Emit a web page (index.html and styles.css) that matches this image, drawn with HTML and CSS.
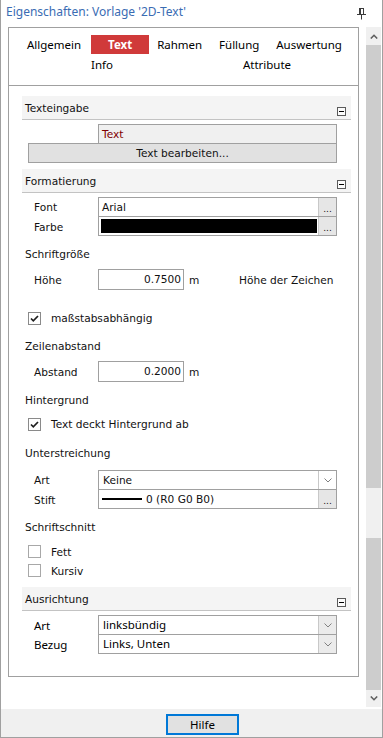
FILE: index.html
```html
<!DOCTYPE html>
<html lang="de">
<head>
<meta charset="utf-8">
<title>Eigenschaften</title>
<link rel="stylesheet" href="styles.css">
</head>
<body>
<div class="window">
  <div class="titlebar">
    <span class="title">Eigenschaften: Vorlage '2D-Text'</span>
    <svg class="pin" width="9" height="12" viewBox="0 0 9 12"><path d="M2 0.5h5M2.5 0.5v6M3.5 0.5v6M6.5 0.5v6M0 6.5h9M4.5 6.5v5" stroke="#3c3c3c" stroke-width="1" fill="none"/></svg>
  </div>
  <div class="main">
    <div class="panel">
      <div class="tabs">
        <div class="tabrow">
          <span class="tab first">Allgemein</span>
          <span class="tab active">Text</span>
          <span class="tab">Rahmen</span>
          <span class="tab">Füllung</span>
          <span class="tab">Auswertung</span>
        </div>
        <div class="tabrow second">
          <span class="tab info">Info</span>
          <span class="tab attr">Attribute</span>
        </div>
      </div>
      <div class="body">
        <div class="sec-head mt10"><span>Texteingabe</span><span class="collapse"></span></div>
        <div class="textfield mt4">Text</div>
        <div class="editbtn">Text bearbeiten...</div>

        <div class="sec-head mt6"><span>Formatierung</span><span class="collapse"></span></div>
        <div class="props mt4">
          <div class="plabel">Font</div>
          <div class="pval firstrow"><span class="ptext">Arial</span><span class="dots">...</span></div>
          <div class="plabel">Farbe</div>
          <div class="pval"><span class="swatch"></span><span class="dots">...</span></div>
        </div>

        <div class="subhead mt8">Schriftgröße</div>
        <div class="numrow mt5">
          <span class="nlabel">Höhe</span>
          <span class="numbox">0.7500</span>
          <span class="unit">m</span>
          <span class="hint">Höhe der Zeichen</span>
        </div>

        <div class="checkrow mt18">
          <span class="cbox"><svg width="11" height="11" viewBox="0 0 11 11"><path d="M2 5.5L4.3 7.8L9 3" stroke="#1e1e1e" stroke-width="1.7" fill="none"/></svg></span>
          <span class="clabel">maßstabsabhängig</span>
        </div>

        <div class="subhead mt8">Zeilenabstand</div>
        <div class="numrow mt5">
          <span class="nlabel">Abstand</span>
          <span class="numbox">0.2000</span>
          <span class="unit">m</span>
        </div>

        <div class="subhead mt8">Hintergrund</div>
        <div class="checkrow mt4">
          <span class="cbox"><svg width="11" height="11" viewBox="0 0 11 11"><path d="M2 5.5L4.3 7.8L9 3" stroke="#1e1e1e" stroke-width="1.7" fill="none"/></svg></span>
          <span class="clabel">Text deckt Hintergrund ab</span>
        </div>

        <div class="subhead mt9">Unterstreichung</div>
        <div class="props mt7">
          <div class="plabel">Art</div>
          <div class="pval firstrow"><span class="ptext pad">Keine</span><span class="drop white"><svg width="8" height="5" viewBox="0 0 8 5"><path d="M0.5 0.5L4 4L7.5 0.5" stroke="#808080" stroke-width="1" fill="none"/></svg></span></div>
          <div class="plabel">Stift</div>
          <div class="pval"><span class="ptext pen"><span class="penline"></span>0 (R0 G0 B0)</span><span class="dots">...</span></div>
        </div>

        <div class="subhead mt8">Schriftschnitt</div>
        <div class="checkrow small mt5">
          <span class="cbox empty"></span>
          <span class="clabel">Fett</span>
        </div>
        <div class="checkrow small">
          <span class="cbox empty"></span>
          <span class="clabel">Kursiv</span>
        </div>

        <div class="sec-head mt7"><span>Ausrichtung</span><span class="collapse"></span></div>
        <div class="props mt4">
          <div class="plabel ui">Art</div>
          <div class="pval firstrow"><span class="ptext ui pad">linksbündig</span><span class="drop"><svg width="8" height="5" viewBox="0 0 8 5"><path d="M0.5 0.5L4 4L7.5 0.5" stroke="#808080" stroke-width="1" fill="none"/></svg></span></div>
          <div class="plabel ui">Bezug</div>
          <div class="pval"><span class="ptext ui pad">Links, Unten</span><span class="drop"><svg width="8" height="5" viewBox="0 0 8 5"><path d="M0.5 0.5L4 4L7.5 0.5" stroke="#808080" stroke-width="1" fill="none"/></svg></span></div>
        </div>
      </div>
    </div>
    <div class="scrollbar">
      <div class="sb-btn"><svg width="8" height="5" viewBox="0 0 8 5"><path d="M0.8 4.5L4 1.3L7.2 4.5" stroke="#606060" stroke-width="1.6" fill="none"/></svg></div>
      <div class="sb-thumb upper"></div>
      <div class="sb-track"></div>
      <div class="sb-thumb lower"></div>
      <div class="sb-btn"><svg width="8" height="5" viewBox="0 0 8 5"><path d="M0.8 0.5L4 3.7L7.2 0.5" stroke="#606060" stroke-width="1.6" fill="none"/></svg></div>
    </div>
  </div>
  <div class="footer">
    <button class="help">Hilfe</button>
  </div>
</div>
</body>
</html>
```

FILE: styles.css
```css
html, body {
  margin: 0;
  padding: 0;
  background: #fff;
}

.window {
  width: 383px;
  height: 738px;
  box-sizing: border-box;
  border: 1px solid #a0a0a0;
  border-top: none;
  display: flex;
  flex-direction: column;
  background: #fff;
  font-family: "DejaVu Sans", sans-serif;
  font-size: 10.6px;
  color: #111;
}

.titlebar {
  height: 24px;
  flex: none;
  display: flex;
  align-items: center;
  justify-content: space-between;
  padding: 0 16px 0 5px;
}

.title {
  font-family: "Noto Sans", sans-serif;
  font-size: 12px;
  color: #3a6cb3;
  margin-top: -1px;
}

.pin {
  display: block;
  margin-top: 3px;
}

.main {
  flex: 1;
  display: flex;
  padding-left: 7px;
  min-height: 0;
}

.panel {
  width: 351px;
  height: 650px;
  margin-top: 3px;
  box-sizing: border-box;
  border: 1px solid #a0a0a0;
  display: flex;
  flex-direction: column;
}

/* tabs */
.tabs {
  border-bottom: 1px solid #a0a0a0;
  padding: 7px 0 10px;
  font-family: "Noto Sans", sans-serif;
  font-size: 11.5px;
  color: #000;
}

.tabrow {
  display: flex;
  height: 19px;
  align-items: center;
  padding-left: 10px;
}

.tabrow.second {
  height: 21px;
  padding-left: 74px;
}

.tab {
  min-width: 58px;
  box-sizing: border-box;
  padding: 0 8px;
  height: 19px;
  line-height: 19px;
  text-align: center;
  white-space: nowrap;
}

.tab.first {
  margin-right: 2px;
}

.tab.active {
  background: #d03a3a;
  color: #fff;
  font-weight: bold;
}

.tab.info {
  min-width: 0;
}

.tab.attr {
  min-width: 0;
  margin-left: 114px;
}

/* body */
.body {
  padding: 0 7px 0 13px;
}

.mt4 { margin-top: 4px; }
.mt5 { margin-top: 5px; }
.mt6 { margin-top: 6px; }
.mt7 { margin-top: 7px; }
.mt8 { margin-top: 8px; }
.mt9 { margin-top: 9px; }
.mt10 { margin-top: 10px; }
.mt18 { margin-top: 18px; }

.sec-head {
  height: 23px;
  background: #f4f4f4;
  border-bottom: 1px solid #c3c3c3;
  display: flex;
  justify-content: space-between;
  align-items: center;
  padding: 0 5px 0 3px;
}

.collapse {
  width: 9px;
  height: 9px;
  box-sizing: border-box;
  border: 1px solid #5a5a5a;
  background: #fbfbfb;
  align-self: flex-end;
  margin-bottom: 3px;
  position: relative;
}

.collapse::after {
  content: "";
  position: absolute;
  left: 1px;
  right: 1px;
  top: 3px;
  height: 1px;
  background: #000;
}

.textfield {
  margin-left: 76px;
  width: 239px;
  height: 19px;
  box-sizing: border-box;
  border: 1px solid #a0a0a0;
  border-bottom: none;
  background: #f0f0f0;
  color: #800000;
  padding-left: 3px;
  line-height: 18px;
}

.editbtn {
  margin-left: 6px;
  width: 309px;
  height: 20px;
  box-sizing: border-box;
  border: 1px solid #a0a0a0;
  background: #e1e1e1;
  text-align: center;
  line-height: 18px;
}

/* property grid */
.props {
  display: grid;
  grid-template-columns: 76px 239px;
}

.plabel {
  padding-left: 12px;
  display: flex;
  align-items: center;
}

.plabel.ui, .ptext.ui {
  font-family: "Noto Sans", sans-serif;
  font-size: 11.5px;
  color: #000;
}

.pval {
  border: 1px solid #a0a0a0;
  border-top: none;
  height: 18px;
  display: flex;
  background: #fff;
}

.pval.firstrow {
  border-top: 1px solid #a0a0a0;
}

.ptext {
  flex: 1;
  padding-left: 3px;
  line-height: 18px;
  white-space: nowrap;
}

.ptext.pad {
  padding-left: 4px;
}

.ptext.pen {
  display: flex;
  align-items: center;
  padding-left: 3px;
}

.penline {
  width: 40px;
  height: 2px;
  background: #000;
  margin-right: 4px;
}

.swatch {
  flex: 1;
  margin: 2px 1px 2px 2px;
  background: #000;
}

.dots {
  width: 17px;
  border-left: 1px solid #c8c8c8;
  background: #e6e6e6;
  text-align: center;
  line-height: 22px;
  font-size: 9px;
  overflow: hidden;
}

.drop {
  width: 17px;
  border-left: 1px solid #c8c8c8;
  background: #ebebeb;
  display: flex;
  align-items: center;
  justify-content: center;
}

.drop.white {
  background: #fff;
}

.drop svg { display: block; }

.subhead {
  height: 20px;
  line-height: 20px;
  padding-left: 3px;
}

.numrow {
  display: flex;
  align-items: center;
  height: 21px;
}

.nlabel {
  width: 64px;
  padding-left: 12px;
}

.numbox {
  width: 86px;
  height: 21px;
  box-sizing: border-box;
  border: 1px solid #a0a0a0;
  text-align: right;
  padding-right: 2px;
  line-height: 19px;
}

.unit {
  width: 55px;
  padding-left: 5px;
  box-sizing: border-box;
}

.checkrow {
  display: flex;
  align-items: center;
  height: 20px;
  padding-left: 6px;
}

.checkrow.small {
  height: 19px;
}

.cbox {
  width: 13px;
  height: 13px;
  box-sizing: border-box;
  border: 1px solid #8a8a8a;
  background: #fff;
  display: flex;
  align-items: center;
  justify-content: center;
  margin-right: 10px;
}

.cbox.empty {
  border-color: #a8a8a8;
}

.cbox svg { display: block; }

/* scrollbar */
.scrollbar {
  width: 15px;
  height: 680px;
  margin-top: 3px;
  margin-left: 7px;
  display: flex;
  flex-direction: column;
  background: #f0f0f0;
}

.sb-btn {
  height: 17px;
  display: flex;
  align-items: center;
  justify-content: center;
  background: #f0f0f0;
}

.sb-btn:first-child {
  height: 18px;
}

.sb-btn svg { display: block; }

.sb-thumb {
  background: #cdcdcd;
}

.sb-thumb.upper { height: 443px; }
.sb-track { height: 50px; }
.sb-thumb.lower { height: 152px; }

/* footer */
.footer {
  height: 28px;
  flex: none;
  background: #f0f0f0;
  display: flex;
  align-items: flex-start;
  padding-left: 165px;
}

.help {
  margin-top: 5px;
  width: 73px;
  height: 21px;
  box-sizing: border-box;
  border: 2px solid #0078d7;
  background: #e1e1e1;
  font-family: "Noto Sans", sans-serif;
  font-size: 11.5px;
  color: #000;
  padding: 0;
  line-height: 16px;
}
```
